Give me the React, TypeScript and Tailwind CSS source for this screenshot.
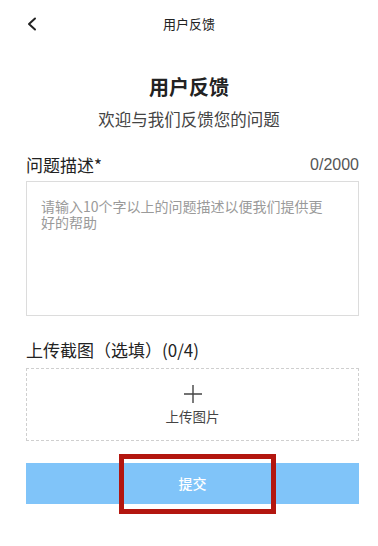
const font = { fontFamily: '"Noto Sans CJK SC", "Noto Sans", sans-serif' };

const App = () => {
  return (
    <div className="relative w-[378px] h-[546px] bg-white text-[#222]" style={font}>
      {/* Nav bar */}
      <div className="relative h-[46px] flex items-center justify-center">
        <svg className="absolute left-[26px] top-[17px]" width="12" height="14" viewBox="0 0 12 14" fill="none">
          <path d="M9 1.5 L3 7 L9 12.5" stroke="#222" strokeWidth="2" strokeLinecap="round" strokeLinejoin="round" />
        </svg>
        <span className="text-[13px] leading-none">用户反馈</span>
      </div>

      {/* Heading */}
      <div className="pt-[30px] flex flex-col items-center">
        <h1 className="text-[20px] font-bold leading-[22px]">用户反馈</h1>
        <p className="mt-[11px] text-[16.5px] leading-[20px] text-[#444]">欢迎与我们反馈您的问题</p>
      </div>

      <div className="ml-[26px] w-[333px]">
        {/* Description */}
        <div className="mt-[26px] flex items-center justify-between">
          <span className="text-[17px] leading-[20px]">问题描述*</span>
          <span className="text-[16px] leading-[20px] text-[#555]" style={{ fontFamily: '"Liberation Sans", sans-serif' }}>0/2000</span>
        </div>
        <div className="mt-[6px] h-[135px] border border-[#dcdcdc] pl-[14px] pr-[24px] pt-[16px]">
          <p className="text-[14px] leading-[16px] text-[#9a9a9a]">请输入10个字以上的问题描述以便我们提供更好的帮助</p>
        </div>

        {/* Upload */}
        <div className="mt-[24px] text-[17px] leading-[20px]">上传截图（选填）(0/4)</div>
        <div className="mt-[8px] h-[73px] border border-dashed border-[#cfcfcf] flex flex-col items-center justify-center">
          <svg width="18" height="18" viewBox="0 0 18 18">
            <path d="M9 0 V18 M0 9 H18" stroke="#444" strokeWidth="1.4" />
          </svg>
          <span className="mt-[5px] text-[13.5px] leading-[16px] text-[#444]">上传图片</span>
        </div>

        {/* Submit */}
        <button className="mt-[22px] w-full h-[41px] bg-[#80c4f9] text-white text-[14px] font-medium flex items-center justify-center">
          提交
        </button>
      </div>

      {/* Red annotation box */}
      <div className="absolute left-[119px] top-[454px] w-[157px] h-[60px] border-[5px] border-[#b3160f]" />
    </div>
  );
};

export default App;
